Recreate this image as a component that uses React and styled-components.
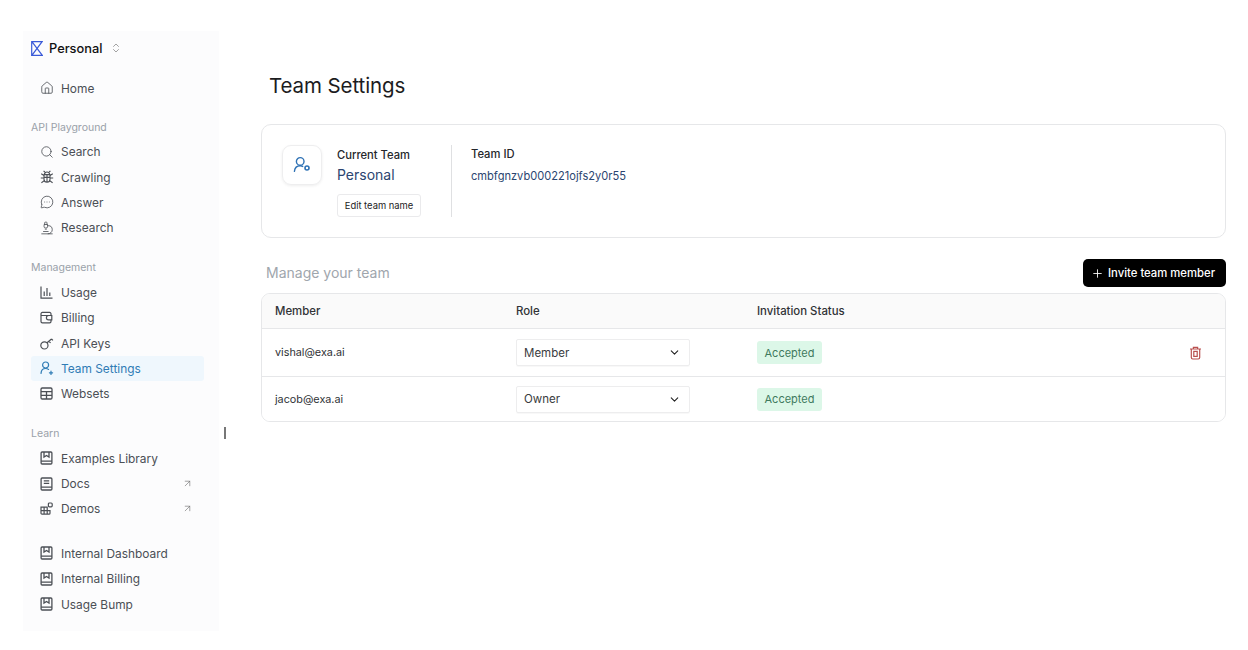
import React from 'react';
import styled, { createGlobalStyle } from 'styled-components';
import { ArrowUpRight, ChevronDown, ChevronsUpDown, House, MessageCircleMore, Microscope, Plus, Search } from 'lucide-react';

const GlobalStyle = createGlobalStyle`
  html, body {
    margin: 0;
    padding: 0;
    background: #fff;
    font-family: Inter, "Liberation Sans", sans-serif;
  }
  * { box-sizing: border-box; }
`;

const Page = styled.div`
  display: flex;
  width: 1248px;
  height: 650px;
  padding: 31px 22px 19px 23px;
  position: relative;
  overflow: hidden;
`;

const Sidebar = styled.aside`
  width: 196px;
  flex-shrink: 0;
  padding: 6px 15px 0 8px;
  background: #fcfcfd;
`;

const Brand = styled.div`
  display: flex;
  align-items: center;
  gap: 6px;
  height: 22px;
  margin-bottom: 16.6px;
  font-size: 12.8px;
  font-weight: 500;
  color: #111;

  svg.updown {
    margin-left: 2px;
    color: #666;
  }
`;

const Section = styled.div`
  margin-top: ${(p) => p.$gap || 0}px;
`;

const Label = styled.div`
  height: 20px;
  line-height: 20px;
  margin-bottom: ${(p) => p.$after ?? 2}px;
  font-size: 10.5px;
  color: #9aa1a9;
`;

const Item = styled.div`
  display: flex;
  align-items: center;
  height: 25.4px;
  padding: 0 11px 0 9px;
  gap: 8px;
  border-radius: 3px;
  font-size: 11.9px;
  color: ${(p) => (p.$active ? '#2f7cb5' : '#4b4f55')};
  background: ${(p) => (p.$active ? '#eff7fd' : 'transparent')};

  svg.out {
    color: #666;
    flex-shrink: 0;
  }
`;

const IconSlot = styled.div`
  display: flex;
  align-items: center;
  width: 13px;
  flex-shrink: 0;

  svg {
    flex-shrink: 0;
  }
`;

const ItemName = styled.div`
  flex: 1;
`;

const Handle = styled.div`
  position: absolute;
  left: 224px;
  top: 427px;
  width: 2px;
  height: 12px;
  background: #777;
`;

const Main = styled.main`
  flex: 1;
  padding: 0 0 0 42px;
  min-width: 0;
`;

const Title = styled.h1`
  margin: 42px 0 25px 8px;
  height: 26px;
  line-height: 26px;
  font-size: 20.5px;
  font-weight: 400;
  color: #1c1c1e;
  letter-spacing: -0.1px;
`;

const TeamCard = styled.section`
  display: flex;
  height: 114px;
  padding: 20px;
  border: 1px solid #e6e7e9;
  border-radius: 10px;
`;

const IconBox = styled.div`
  width: 40px;
  height: 40px;
  display: flex;
  align-items: center;
  justify-content: center;
  border: 1px solid #eeeeef;
  border-radius: 9px;
  box-shadow: 0 1px 3px rgba(0, 0, 0, 0.07);
  color: #2f72b5;
`;

const TeamInfo = styled.div`
  display: flex;
  flex-direction: column;
  align-items: flex-start;
  margin-left: 15px;
  width: 115px;
  border-right: 1px solid #dfe0e2;
  height: 72px;
`;

const SmallHead = styled.div`
  height: 20px;
  line-height: 20px;
  font-size: 11.2px;
  font-weight: 500;
  color: #25272b;
`;

const TeamName = styled.div`
  height: 20px;
  line-height: 20px;
  font-size: 14px;
  color: #2b4570;
`;

const EditButton = styled.button`
  margin-top: 9px;
  width: 84px;
  height: 23px;
  padding: 0;
  background: #fff;
  border: 1px solid #eaeaec;
  border-radius: 3px;
  font-family: inherit;
  font-size: 9.4px;
  color: #222;
`;

const TeamId = styled.div`
  margin-left: 19px;
  margin-top: -1px;
`;

const IdValue = styled.div`
  margin-top: 2px;
  height: 20px;
  line-height: 20px;
  font-size: 11.1px;
  color: #2b4570;
`;

const ManageRow = styled.div`
  display: flex;
  align-items: center;
  justify-content: space-between;
  margin-top: 21px;
  height: 28px;
`;

const ManageTitle = styled.h2`
  margin: 0 0 2px 5px;
  font-size: 14px;
  font-weight: 400;
  color: #a0a6ad;
`;

const InviteButton = styled.button`
  display: flex;
  align-items: center;
  justify-content: center;
  gap: 4px;
  width: 143px;
  height: 28px;
  padding: 0 3px 0 0;
  border: none;
  border-radius: 5px;
  background: #000;
  color: #fff;
  font-family: inherit;
  font-size: 11.3px;
  font-weight: 500;
`;

const Members = styled.div`
  margin-top: 6px;
  border: 1px solid #e6e7e9;
  border-radius: 9px;
  overflow: hidden;
`;

const Row = styled.div`
  display: grid;
  grid-template-columns: 241px 241px 1fr 32px;
  align-items: center;
  height: ${(p) => p.$height}px;
  padding: 0 14px 0 13px;
  font-size: ${(p) => (p.$head ? 11.4 : 10.8)}px;
  color: #303236;
  background: ${(p) => (p.$head ? '#fafafa' : '#fff')};
  border-bottom: ${(p) => (p.$last ? 'none' : '1px solid #e6e7e9')};
  font-weight: ${(p) => (p.$head ? 500 : 400)};
`;

const RoleSelect = styled.div`
  display: flex;
  align-items: center;
  justify-content: space-between;
  width: 174px;
  height: 27px;
  padding: 0 8px 0 7px;
  border: 1px solid #ededee;
  border-radius: 2px;
  box-shadow: 0 1px 1px rgba(0, 0, 0, 0.03);
  font-size: 11.5px;
  color: #3a3c40;

  svg {
    color: #222;
  }
`;

const Badge = styled.div`
  display: flex;
  align-items: center;
  justify-content: center;
  width: 65px;
  height: 23px;
  border-radius: 3px;
  background: #dcf7e8;
  color: #3f7a5e;
  font-size: 11px;
`;

const TrashButton = styled.div`
  display: flex;
  justify-content: center;
  color: #b9504f;
`;

const BookIcon = () => (
  <svg width="13" height="14" viewBox="0 0 13 14" fill="none" stroke="currentColor" strokeWidth="1.3">
    <rect x="1.1" y="1" width="10.8" height="12" rx="1" />
    <path d="M1.1 10.2h10.8M4 1v5l2.5-1.5L9 6V1" />
  </svg>
);

const DocIcon = () => (
  <svg width="13" height="14" viewBox="0 0 13 14" fill="none" stroke="currentColor" strokeWidth="1.3">
    <rect x="1.1" y="1" width="10.8" height="12" rx="1" />
    <path d="M1.1 10.2h10.8M3.8 3.8h5.4M3.8 6.4h5.4" />
  </svg>
);

const DemosIcon = () => (
  <svg width="13" height="13" viewBox="0 0 13 13" fill="none" stroke="currentColor" strokeWidth="1.2">
    <path d="M1 5.2h6.2v7H2a1 1 0 0 1-1-1zM1 8.7h9M4.1 5.2v7M7.2 8.7h2.8v2.5a1 1 0 0 1-1 1H7.2" />
    <rect x="8.4" y="1" width="3.8" height="3.8" rx="1" />
  </svg>
);

const UsageIcon = () => (
  <svg width="13" height="13" viewBox="0 0 13 13" fill="none" stroke="currentColor" strokeWidth="1.2">
    <path d="M1 .5v11.7h11.5M4.2 5.5v4.6M7 2v8.1M9.8 6.5v3.6" />
  </svg>
);

const WalletIcon = () => (
  <svg width="13" height="13" viewBox="0 0 13 13" fill="none" stroke="currentColor" strokeWidth="1.2">
    <path d="M11 4.5V2.8a1.4 1.4 0 0 0-1.4-1.4H2.4A1.4 1.4 0 0 0 1 2.8v7.6c0 .8.6 1.4 1.4 1.4h7.2c.8 0 1.4-.6 1.4-1.4V9" />
    <path d="M1 4.5h10.8v4.4H8.6a2.2 2.2 0 0 1 0-4.4" />
  </svg>
);

const KeysIcon = () => (
  <svg width="14" height="13" viewBox="0 0 14 13" fill="none" stroke="currentColor" strokeWidth="1.2">
    <circle cx="4.4" cy="8.4" r="3.6" />
    <path d="M7 5.8 11.5 2M8.8 4.3l1.8 1.6M11.5 2l1.4 1.4" />
  </svg>
);

const TeamPlusIcon = () => (
  <svg width="14" height="14" viewBox="0 0 14 14" fill="none" stroke="currentColor" strokeWidth="1.2" strokeLinecap="round">
    <circle cx="5.6" cy="4" r="3" />
    <path d="M1 12.4c.2-2.9 2-4.9 4.6-4.9 1.2 0 2.2.3 3 .9" />
    <path d="M11 10.2v3.2M9.4 11.8h3.2" />
  </svg>
);

const WebsetsIcon = () => (
  <svg width="13" height="13" viewBox="0 0 13 13" fill="none" stroke="currentColor" strokeWidth="1.3">
    <rect x="1" y="1" width="11" height="11" rx="1.3" />
    <path d="M1 4.7h11M1 8.3h11M6.5 4.7V12" />
  </svg>
);

const CrawlIcon = () => (
  <svg width="14" height="14" viewBox="0 0 14 14" fill="none" stroke="currentColor" strokeWidth="1.1">
    <path d="M4.4 4.6a2.6 2.6 0 0 1 5.2 0zM4 4.6h6v4.6a3 3 0 0 1-6 0zM7 4.6V12M4 7.4h6" />
    <path d="M4.8 2 3.6.8M9.2 2 10.4.8M4 5.4 1.2 3.8M10 5.4l2.8-1.6M4 8H.8M10 8h3.2M4.4 10.6 1.4 12.8M9.6 10.6l3 2.2" />
  </svg>
);

const TeamGearIcon = () => (
  <svg width="18" height="18" viewBox="0 0 18 18" fill="none" stroke="currentColor" strokeWidth="1.4" strokeLinecap="round">
    <circle cx="7.2" cy="5.4" r="3.8" />
    <path d="M1.4 15.4c.4-3.4 2.6-5.6 5.8-5.6 1 0 1.8.2 2.5.6" />
    <circle cx="14" cy="12" r="2" strokeWidth="1.6" />
  </svg>
);

const TrashIcon = () => (
  <svg width="13" height="14" viewBox="0 0 13 14" fill="none" stroke="currentColor" strokeWidth="1.2">
    <path d="M1 3h11M4.4 3V1.4h4.2V3M2.3 3v8.6c0 .8.6 1.4 1.4 1.4h5.6c.8 0 1.4-.6 1.4-1.4V3" />
    <rect x="4.8" y="5.4" width="3.4" height="5" />
  </svg>
);

const Logo = () => (
  <svg width="12" height="15" viewBox="0 0 12 15" fill="none" strokeWidth="1.2">
    <path d="M.7 14.4V.7h10.4L.9 14.3h10.4L.9.7" stroke="#3a5ad8" />
  </svg>
);

const iconProps = { size: 14, strokeWidth: 1.4 };

const playground = [
  { name: 'Search', icon: <Search {...iconProps} /> },
  { name: 'Crawling', icon: <CrawlIcon /> },
  { name: 'Answer', icon: <MessageCircleMore {...iconProps} /> },
  { name: 'Research', icon: <Microscope {...iconProps} /> },
];

const management = [
  { name: 'Usage', icon: <UsageIcon /> },
  { name: 'Billing', icon: <WalletIcon /> },
  { name: 'API Keys', icon: <KeysIcon /> },
  { name: 'Team Settings', icon: <TeamPlusIcon />, active: true },
  { name: 'Websets', icon: <WebsetsIcon /> },
];

const learn = [
  { name: 'Examples Library', icon: <BookIcon /> },
  { name: 'Docs', icon: <DocIcon />, external: true },
  { name: 'Demos', icon: <DemosIcon />, external: true },
];

const internal = [
  { name: 'Internal Dashboard', icon: <BookIcon /> },
  { name: 'Internal Billing', icon: <BookIcon /> },
  { name: 'Usage Bump', icon: <BookIcon /> },
];

const members = [
  { email: 'vishal@exa.ai', role: 'Member', height: 48, removable: true },
  { email: 'jacob@exa.ai', role: 'Owner', height: 44 },
];

const NavItems = ({ items }) =>
  items.map((item) => (
    <Item key={item.name} $active={item.active}>
      <IconSlot>{item.icon}</IconSlot>
      <ItemName>{item.name}</ItemName>
      {item.external && <ArrowUpRight className="out" size={11} strokeWidth={1.3} />}
    </Item>
  ));

const App = () => (
  <Page>
    <GlobalStyle />
    <Sidebar>
      <Brand>
        <Logo />
        Personal
        <ChevronsUpDown className="updown" size={12} strokeWidth={1.2} />
      </Brand>
      <NavItems items={[{ name: 'Home', icon: <House {...iconProps} /> }]} />
      <Section $gap={17}>
        <Label $after={1}>API Playground</Label>
        <NavItems items={playground} />
      </Section>
      <Section $gap={17}>
        <Label>Management</Label>
        <NavItems items={management} />
      </Section>
      <Section $gap={17}>
        <Label>Learn</Label>
        <NavItems items={learn} />
      </Section>
      <Section $gap={19}>
        <NavItems items={internal} />
      </Section>
    </Sidebar>
    <Handle />
    <Main>
      <Title>Team Settings</Title>
      <TeamCard>
        <IconBox>
          <TeamGearIcon />
        </IconBox>
        <TeamInfo>
          <SmallHead>Current Team</SmallHead>
          <TeamName>Personal</TeamName>
          <EditButton>Edit team name</EditButton>
        </TeamInfo>
        <TeamId>
          <SmallHead>Team ID</SmallHead>
          <IdValue>cmbfgnzvb000221ojfs2y0r55</IdValue>
        </TeamId>
      </TeamCard>
      <ManageRow>
        <ManageTitle>Manage your team</ManageTitle>
        <InviteButton>
          <Plus size={13} strokeWidth={1.6} />
          Invite team member
        </InviteButton>
      </ManageRow>
      <Members>
        <Row $head $height={35}>
          <div>Member</div>
          <div>Role</div>
          <div>Invitation Status</div>
          <div />
        </Row>
        {members.map((member, i) => (
          <Row key={member.email} $height={member.height} $last={i === members.length - 1}>
            <div>{member.email}</div>
            <RoleSelect>
              {member.role}
              <ChevronDown size={13} strokeWidth={2} />
            </RoleSelect>
            <Badge>Accepted</Badge>
            <TrashButton>{member.removable && <TrashIcon />}</TrashButton>
          </Row>
        ))}
      </Members>
    </Main>
  </Page>
);

export default App;
